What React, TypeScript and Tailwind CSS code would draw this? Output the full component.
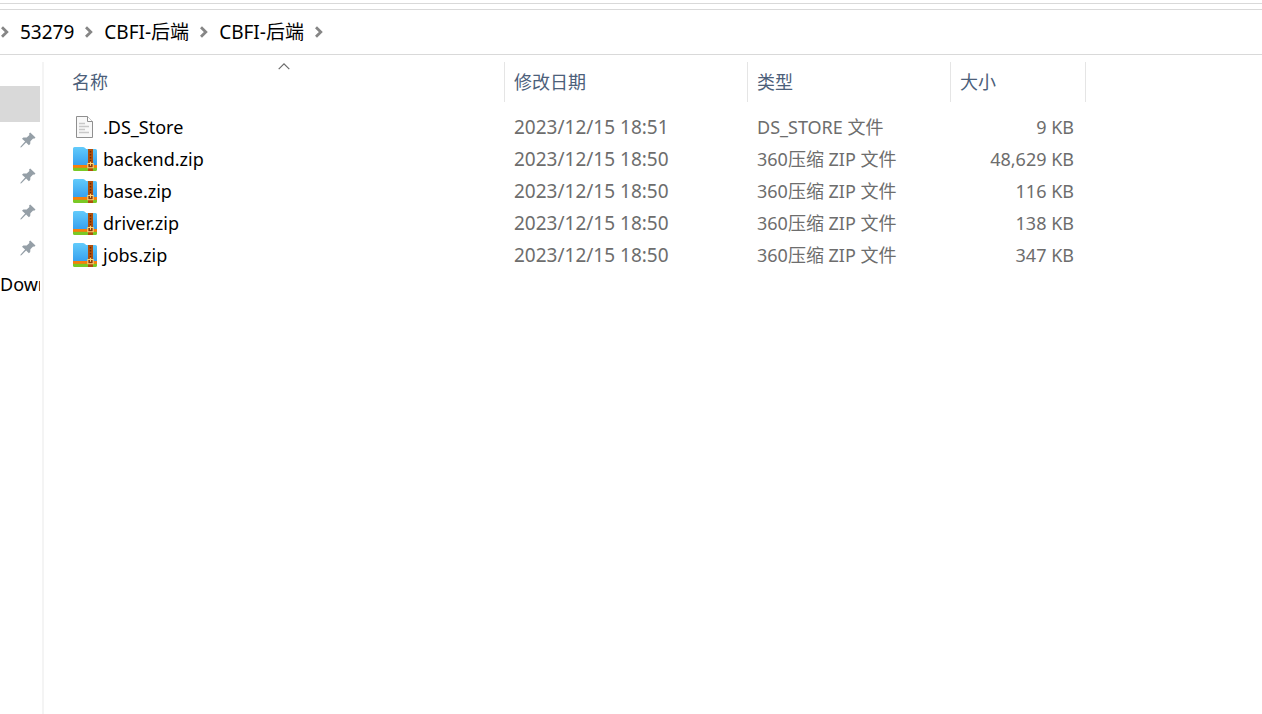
const files = [
  { name: ".DS_Store", date: "2023/12/15 18:51", type: "DS_STORE 文件", size: "9 KB", zip: false },
  { name: "backend.zip", date: "2023/12/15 18:50", type: "360压缩 ZIP 文件", size: "48,629 KB", zip: true },
  { name: "base.zip", date: "2023/12/15 18:50", type: "360压缩 ZIP 文件", size: "116 KB", zip: true },
  { name: "driver.zip", date: "2023/12/15 18:50", type: "360压缩 ZIP 文件", size: "138 KB", zip: true },
  { name: "jobs.zip", date: "2023/12/15 18:50", type: "360压缩 ZIP 文件", size: "347 KB", zip: true },
];

const crumbs = ["53279", "CBFI-后端", "CBFI-后端"];

function Chevron() {
  return (
    <svg width="8" height="12" viewBox="0 0 8 12" fill="none" className="shrink-0">
      <path d="M1 1.2L5.8 6L1 10.8" stroke="#868686" strokeWidth="2.8" />
    </svg>
  );
}

function PinIcon() {
  return (
    <svg width="16" height="16" viewBox="0 0 16 16" fill="#959fa7">
      <path d="M10.2 0.5L15.5 5.6L14.2 6.8L13.1 6.5L10.4 9.2L10.2 12.1L8.9 13.3L6.1 10.6L1.4 15.3L0.3 15.6L0.6 14.4L5.1 9.6L2 6.7L3.4 5.5L6.7 5.5L9.4 2.9L9.1 1.6Z" />
    </svg>
  );
}

function DocIcon() {
  return (
    <svg width="24" height="24" viewBox="0 0 24 24" className="shrink-0">
      <path d="M3.5 1.5H14.5L19.5 6.5V22.5H3.5Z" fill="#f8f8f8" stroke="#8f8f8f" />
      <path d="M14.5 1.5V6.5H19.5" fill="#fff" stroke="#8f8f8f" />
      <path d="M6 8.5H12M6 11.5H16M6 14.5H12M6 17.5H16" stroke="#c8c8c8" strokeWidth="1.6" />
    </svg>
  );
}

function ZipIcon() {
  return (
    <svg width="24" height="24" viewBox="0 0 24 24" className="shrink-0">
      <defs>
        <linearGradient id="folder" x1="0" y1="0" x2="0" y2="1">
          <stop offset="0" stopColor="#62cbfb" />
          <stop offset="1" stopColor="#38a1ef" />
        </linearGradient>
      </defs>
      <path d="M0 20H24V22.5Q24 24 22.5 24H1.5Q0 24 0 22.5Z" fill="#7ac925" />
      <path d="M0 17H24V20.8H0Z" fill="#f87f0c" />
      <path d="M0 1.5Q0 0 1.5 0H10Q11 0 11.8 0.8L13.2 2H22.5Q24 2 24 3.5V18H0Z" fill="url(#folder)" />
      <path d="M15 2H20V24H15Z" fill="#b04f0b" />
      <path d="M17.5 4V14" stroke="#642a08" strokeWidth="1.4" strokeDasharray="1.4 1.6" />
      <path d="M14.8 16.5H20.2V20.7H14.8Z" fill="#8b3807" stroke="#ffd477" strokeWidth="1.1" />
      <path d="M17.5 14.8V18.8" stroke="#ffd477" strokeWidth="1.1" />
    </svg>
  );
}

export default function App() {
  return (
    <div className="flex min-h-screen flex-col bg-white pt-[3px] font-['Noto_Sans','Noto_Sans_CJK_SC',sans-serif] text-[18px] leading-6 text-black">
      <div className="h-[7px] border-y border-[#d9d9d9]" />
      <nav className="flex h-[45px] items-center border-b border-[#d9d9d9] pb-px text-[19px]">
        <ol className="flex items-center">
          <li className="pl-px">
            <Chevron />
          </li>
          {crumbs.map((crumb, i) => (
            <li key={i} className="flex items-center gap-[11px] pl-[11px]">
              <a href="#">{crumb}</a>
              <Chevron />
            </li>
          ))}
        </ol>
      </nav>

      <div className="flex grow pt-[7px]">
        <aside className="w-11 shrink-0 border-r-2 border-[#f4f4f4] pt-6">
          <ul className="w-10 overflow-hidden">
            <li className="h-9 bg-[#d9d9d9]" />
            {[1, 2, 3, 4].map((n) => (
              <li key={n} className="flex h-9 items-center justify-end pr-1">
                <PinIcon />
              </li>
            ))}
            <li className="flex h-9 items-center">
              <a href="#">Downloads</a>
            </li>
          </ul>
        </aside>

        <main className="grow">
          <table className="w-[1042px] table-fixed border-separate border-spacing-0 text-left">
            <colgroup>
              <col className="w-[461px]" />
              <col className="w-[243px]" />
              <col className="w-[203px]" />
              <col className="w-[135px]" />
            </colgroup>
            <thead className="text-[#4c607a]">
              <tr className="h-10">
                <th className="relative border-r border-[#e5e5e5] p-0 pl-7 font-normal">
                  名称
                  <svg width="12" height="7" viewBox="0 0 12 7" fill="none" className="absolute top-px left-1/2 ml-1">
                    <path d="M0.7 6.2L6 0.9L11.3 6.2" stroke="#6a6a6a" strokeWidth="1.2" />
                  </svg>
                </th>
                <th className="border-r border-[#e5e5e5] p-0 pl-[9px] font-normal">修改日期</th>
                <th className="border-r border-[#e5e5e5] p-0 pl-[9px] font-normal">类型</th>
                <th className="border-r border-[#e5e5e5] p-0 pl-[9px] font-normal">大小</th>
              </tr>
            </thead>
            <tbody className="text-[#6d6d6d]">
              <tr className="h-[9px]" />
              {files.map((file) => (
                <tr key={file.name} className="h-8">
                  <td className="p-0 pl-[29px] text-black">
                    <div className="flex items-center gap-1.5">
                      {file.zip ? <ZipIcon /> : <DocIcon />}
                      {file.name}
                    </div>
                  </td>
                  <td className="p-0 pl-[9px] text-[19px]">{file.date}</td>
                  <td className="p-0 pl-[9px]">{file.type}</td>
                  <td className="p-0 pr-3 text-right">{file.size}</td>
                </tr>
              ))}
            </tbody>
          </table>
        </main>
      </div>
    </div>
  );
}
